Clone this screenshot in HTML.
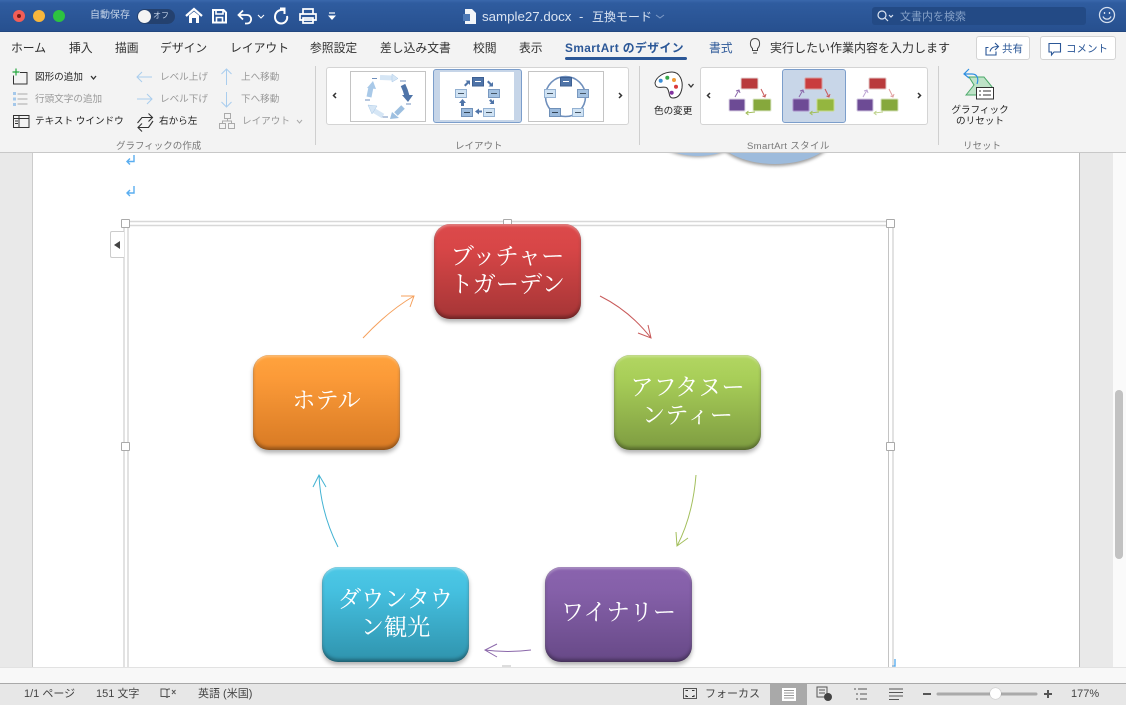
<!DOCTYPE html>
<html lang="ja"><head><meta charset="utf-8"><title>sample27.docx</title>
<style>
html,body{margin:0;padding:0}
body{width:1126px;height:705px;overflow:hidden;position:relative;background:#e8e8e8;font-family:"Liberation Sans","Noto Sans CJK JP",sans-serif;color:#2b2b2b}
.a{position:absolute}
.t{position:absolute;white-space:nowrap;line-height:14px}
.tab{font-size:11.8px;top:41px;color:#303030}
.s{font-size:9.6px;color:#222}
.d{font-size:9.6px;color:#999}
.g{font-size:9.5px;color:#777;top:140px}
.node{position:absolute;width:147px;height:95px;border-radius:16px;box-shadow:0 3px 4px rgba(0,0,0,.3),inset 0 -3px 3px rgba(0,0,0,.3),inset 0 2px 2px rgba(255,255,255,.3),inset 0 0 1px rgba(0,0,0,.35);color:#fff;font-family:"Liberation Serif","Noto Serif CJK SC",serif;font-size:23.2px;line-height:28px;text-align:center;box-sizing:border-box;display:flex;align-items:center;justify-content:center;padding:0 7px 2px}
.h{position:absolute;width:7px;height:7px;background:#fff;border:1px solid #aaa;border-radius:1px}
.st{position:absolute;font-size:11px;top:687px;color:#444;white-space:nowrap;line-height:14px}
svg{position:absolute;overflow:visible}
.box{position:absolute;background:#fff;border:1px solid #d4d4d4;border-radius:3px;box-sizing:border-box}
</style></head><body>

<!-- document -->
<div class="a" style="left:0;top:153px;width:1113px;height:514px;background:#e9e9e9"></div>
<div class="a" style="left:32px;top:153px;width:1048px;height:514px;background:#fff;border-right:1px solid #bbb;border-left:1px solid #ccc;box-sizing:border-box"></div>
<div class="a" style="left:1113px;top:153px;width:13px;height:530px;background:#fafafa"></div>
<div class="a" style="left:1115px;top:390px;width:8px;height:169px;background:#c2c2c2;border-radius:4px"></div>
<div class="a" style="left:0;top:667px;width:1126px;height:16px;background:#f8f8f8;border-top:1px solid #e2e2e2;box-sizing:border-box"></div>

<!-- circles peeking below ribbon -->
<div class="a" style="left:715px;top:100px;width:120px;height:64px;border-radius:50%;background:#9dbbdc;box-shadow:0 2px 3px rgba(0,0,0,.4)"></div>
<div class="a" style="left:655px;top:110px;width:86px;height:46px;border-radius:50%;background:#9dbbdc;box-shadow:0 1px 3px rgba(0,0,0,.4)"></div>

<!-- return marks, frame, arrows -->
<svg style="left:0;top:0" width="1126" height="705" fill="none">
<g stroke="#5aaef0" stroke-width="1.4"><path d="M134 155V161.5H127M130 158.5L127 161.5L130 164.5"/><path d="M134 186V193H127M130 190L127 193L130 196"/><path d="M895 659V666H892"/></g>
<path d="M125 221.5H891M125 225.5H891" stroke="#d8d8d8" stroke-width="1.5"/>
<path d="M124 225V667M128 225V667M888.5 225V667M893 225V667" stroke="#c4c4c4"/>
<g stroke-width="1" fill="none">
<path d="M363 338C378 322 395 307 414 296M401 296H414L410 307" stroke="#f5a05c"/>
<path d="M600 296C620 306 637 320 651 338M648 325L651 338L638 333" stroke="#c85a5a"/>
<path d="M696 475C694 500 688 525 677 546M676 532L677 546L688 538" stroke="#a3bf5c"/>
<path d="M531 650C515 652 500 652 485 650M497 644L485 650L497 657" stroke="#8b68aa"/>
<path d="M338 547C327 525 320 500 319 475M313 487L319 475L326 487" stroke="#43b3d3"/>
</g>
</svg>
<div class="h" style="left:121px;top:219px"></div><div class="h" style="left:503px;top:219px"></div><div class="h" style="left:886px;top:219px"></div>
<div class="h" style="left:121px;top:442px"></div><div class="h" style="left:886px;top:442px"></div>
<div class="a" style="left:502px;top:665px;width:9px;height:2px;background:#ddd"></div>
<div class="a" style="left:110px;top:231px;width:14px;height:27px;background:#fff;border:1px solid #ccc;border-right:0;border-radius:2px 0 0 2px;box-sizing:border-box"></div>
<div class="a" style="left:114px;top:241px;border:4px solid transparent;border-right:6px solid #444;border-left:0"></div>

<div class="node" style="left:434px;top:224px;background:linear-gradient(#dc4a4b,#d84647 25%,#a53536)">ブッチャー<br>トガーデン</div>
<div class="node" style="left:614px;top:355px;background:linear-gradient(#b2d662,#a8ce58 25%,#7e9c41)">アフタヌー<br>ンティー</div>
<div class="node" style="left:253px;top:355px;background:linear-gradient(#ffa33d,#fb9a38 25%,#d87a24);padding-bottom:3px">ホテル</div>
<div class="node" style="left:322px;top:567px;background:linear-gradient(#4dc8e6,#45c0e0 25%,#2f93ad)">ダウンタウ<br>ン観光</div>
<div class="node" style="left:545px;top:567px;background:linear-gradient(#8a63ae,#8560a9 25%,#674987);padding-bottom:4px">ワイナリー</div>

<!-- title bar -->
<div class="a" style="left:0;top:0;width:1126px;height:32px;background:linear-gradient(#3a68ac 0,#2f5c9f 10%,#27508f);border-bottom:1px solid #22477f;box-sizing:border-box"></div>
<div class="a" style="left:13px;top:10px;width:12px;height:12px;border-radius:50%;background:#f25e57"></div><div class="a" style="left:17px;top:14px;width:4px;height:4px;border-radius:50%;background:#7a1a14"></div>
<div class="a" style="left:33px;top:10px;width:12px;height:12px;border-radius:50%;background:#f8b63c"></div>
<div class="a" style="left:53px;top:10px;width:12px;height:12px;border-radius:50%;background:#2dc340"></div>
<div class="t" style="left:90px;top:9px;font-size:10px;color:#c4d3e8">自動保存</div>
<div class="a" style="left:137px;top:9px;width:38px;height:15px;border-radius:8px;background:#24416f"></div>
<div class="a" style="left:138px;top:10px;width:13px;height:13px;border-radius:50%;background:#f4f4f4"></div>
<div class="t" style="left:153px;top:9px;font-size:8px;color:#c4d3e8">オフ</div>
<svg style="left:0;top:0" width="1126" height="32" fill="none" stroke="#fff" stroke-width="2">
<path d="M186 16L194 9L202 16" stroke-width="2.2"/><path d="M189 15.5L194 11.5L199 15.5V23H196V18H192V23H189Z" fill="#fff" stroke="none"/>
<path d="M213 10H223.500L226 12.500V22.500H213Z"/><path d="M216 10V14H223V10" stroke-width="1.6"/><path d="M216.500 22V17.500H222.500V22" stroke-width="1.6"/>
<path d="M243 10.500L238.500 15L243 19.500M239 15H247C252.500 15 252.500 23.500 247 23.500H245" stroke-width="1.8"/>
<path d="M258 15L261 18L264 15" stroke-width="1.1"/>
<path d="M280 8.500H284.500V14M284 10C278 9 275 13 275 17C275 21 278 23.500 281 23.500C285 23.500 288 20 287 16" stroke-width="2"/>
<path d="M303 14V9H313V14M300 14H316V20H300ZM303 18H313V23H303Z" stroke-width="1.7"/>
<path d="M329 13H335" stroke-width="1.2"/><path d="M328 15.500H336L332 20Z" fill="#fff" stroke="none"/>
</svg>
<svg style="left:463px;top:9px" width="14" height="16"><path d="M2 0H9L13 4V15H2Z" fill="#f2f5f9"/><rect x="0" y="5" width="7" height="7" fill="#4c78b5"/></svg>
<div class="t" style="left:482px;top:10px;font-size:13.300px;color:#d9e3f1">sample27.docx</div>
<div class="t" style="left:579px;top:10px;font-size:13px;color:#d9e3f1">-</div>
<div class="t" style="left:592px;top:10px;font-size:12px;color:#d9e3f1">互換モード</div>
<svg style="left:655px;top:14px" width="10" height="6" fill="none" stroke="#7d9ac6"><path d="M1 1L5 4L9 1"/></svg>
<div class="a" style="left:872px;top:7px;width:214px;height:18px;background:#234a85;border-radius:3px"></div>
<svg style="left:877px;top:10px" width="16" height="12" fill="none" stroke="#dbe4f1" stroke-width="1.2"><circle cx="5" cy="5" r="4"/><path d="M8 8L11 11M12 5L14 7L16 5"/></svg>
<div class="t" style="left:900px;top:10px;font-size:11px;color:#86a1c8">文書内を検索</div>
<svg style="left:1098px;top:6px" width="18" height="18" fill="none" stroke="#d5dfee" stroke-width="1.3"><circle cx="9" cy="9" r="7.500"/><path d="M5 10.500C6.500 14 11.500 14 13 10.500"/><path d="M6.500 6V8M11.500 6V8"/></svg>

<!-- ribbon -->
<div class="a" style="left:0;top:32px;width:1126px;height:121px;background:#f3f3f3;border-bottom:1px solid #c8c8c8;box-sizing:border-box"></div>
<span class="t tab" style="left:11px">ホーム</span>
<span class="t tab" style="left:69px">挿入</span>
<span class="t tab" style="left:115px">描画</span>
<span class="t tab" style="left:160px">デザイン</span>
<span class="t tab" style="left:230px">レイアウト</span>
<span class="t tab" style="left:310px">参照設定</span>
<span class="t tab" style="left:380px">差し込み文書</span>
<span class="t tab" style="left:473px">校閲</span>
<span class="t tab" style="left:519px">表示</span>
<span class="t tab" style="left:565px;color:#2b5797;font-weight:700;letter-spacing:.45px">SmartArt のデザイン</span>
<div class="a" style="left:565px;top:57px;width:122px;height:3px;background:#2b5797;border-radius:2px"></div>
<span class="t tab" style="left:709px;color:#2b5797">書式</span>
<svg style="left:748px;top:37px" width="14" height="18" fill="none" stroke="#444"><path d="M4.500 11.500C1 8 2 1.500 7 1.500C12 1.500 13 8 9.500 11.500V13.500H4.500ZM5 16H9"/></svg>
<span class="t tab" style="left:770px;font-size:12px">実行したい作業内容を入力します</span>

<div class="box" style="left:976px;top:36px;width:54px;height:24px"></div>
<svg style="left:985px;top:42px" width="14" height="14" fill="none" stroke="#2b5797" stroke-width="1.1"><path d="M10 1L13.500 4.500L10 8M13 4.500C8 4.500 6 6 5 9.500M3.500 5.500H1V13H11V9.500"/></svg>
<span class="t" style="left:1002px;top:42px;font-size:10.5px;color:#2b5797">共有</span>
<div class="box" style="left:1040px;top:36px;width:76px;height:24px"></div>
<svg style="left:1048px;top:42px" width="14" height="14" fill="none" stroke="#2b5797" stroke-width="1.1"><path d="M1 1.500H12.500V10H6L3.500 13V10H1Z"/></svg>
<span class="t" style="left:1066px;top:42px;font-size:10.5px;color:#2b5797">コメント</span>

<!-- graphic group -->
<svg style="left:0;top:60px" width="320" height="80" fill="none">
<path d="M13.500 15.500V24H27V12.500H20" stroke="#333"/><path d="M16 8.500V15.500M12.500 12H19.500" stroke="#22a83d" stroke-width="1.2"/>
<path d="M13 32H16V35H13ZM13 37.500H16V40.500H13ZM13 43H16V46H13Z" fill="#a5c8ea"/><path d="M17.500 34H27.500M17.500 39H27.500M17.500 44H27.500" stroke="#aaa"/>
<path d="M13.500 55.500H29V67.500H13.500ZM19 55.500V67.500M13.500 58.500H29" stroke="#333"/><path d="M15 61H18M15 63.500H18" stroke="#333"/>
<path d="M137 17H152M142 12L137 17L142 22M137 39H152M147 34L152 39L147 44" stroke="#a9cdee"/>
<path d="M226.500 9V25M221.500 14L226.500 9L231.500 14M226.500 32V47M221.500 42L226.500 47L231.500 42" stroke="#a9cdee"/>
<path d="M137.500 63L142 57.500H152.500M148.500 53.500L152.500 57.500L148.500 61.500M153 61L148.500 67.500H138M142 63.500L138 67.500L142 71.500" stroke="#333" stroke-width="1.1"/>
<path d="M224.500 53.500H230.500V58.500H224.500ZM219.500 63.500H225.500V68.500H219.500ZM228.500 63.500H234.500V68.500H228.500ZM227.500 58.500V61M222.500 63.500V61H231.500V63.500" stroke="#aaa"/>
<path d="M91 16L93.500 19L96 16" stroke="#333" stroke-width="1.3"/>
<path d="M297 60L299.500 63L302 60" stroke="#aaa"/>
</svg>
<span class="t s" style="left:35px;top:71px">図形の追加</span>
<span class="t d" style="left:35px;top:93px">行頭文字の追加</span>
<span class="t s" style="left:35px;top:115px">テキスト ウインドウ</span>
<span class="t d" style="left:160px;top:71px">レベル上げ</span>
<span class="t d" style="left:160px;top:93px">レベル下げ</span>
<span class="t s" style="left:159px;top:115px">右から左</span>
<span class="t d" style="left:241px;top:71px">上へ移動</span>
<span class="t d" style="left:241px;top:93px">下へ移動</span>
<span class="t d" style="left:242px;top:115px">レイアウト</span>
<span class="t g" style="left:116px">グラフィックの作成</span>
<div class="a" style="left:315px;top:66px;width:1px;height:79px;background:#cfcfcf"></div>

<!-- layout group -->
<div class="box" style="left:326px;top:67px;width:303px;height:58px"></div>
<div class="a" style="left:350px;top:71px;width:76px;height:51px;background:#fff;border:1px solid #c4c4c4;box-sizing:border-box"></div>
<div class="a" style="left:433px;top:69px;width:89px;height:54px;background:#c6d5e8;border:1px solid #7c9ecb;border-radius:3px;box-sizing:border-box"></div>
<div class="a" style="left:440px;top:72px;width:74px;height:48px;background:#fff"></div>
<div class="a" style="left:528px;top:71px;width:76px;height:51px;background:#fff;border:1px solid #c4c4c4;box-sizing:border-box"></div>
<svg style="left:320px;top:60px" width="320" height="70" fill="none">
<path d="M16 33L13.500 35.500L16 38M299 33L301.500 35.500L299 38" stroke="#333" stroke-width="1.500"/>
<!-- thumb 1 -->
<path d="M60 17.500L73 18" stroke="#d6e6f5" stroke-width="5"/><path d="M72 14L78 18.500L72 22Z" fill="#d6e6f5" stroke="#a9c9e8" stroke-width=".5"/>
<path d="M83 25C85 29 86 32 87 36" stroke="#4f74a8" stroke-width="5"/><path d="M82 35L93 35L88 42Z" fill="#4f74a8"/>
<path d="M83 47L76 54" stroke="#9dbfe0" stroke-width="5"/><path d="M72 52L79 58L70 59Z" fill="#9dbfe0"/>
<path d="M63 56L53 50" stroke="#d6e6f5" stroke-width="5"/><path d="M48 45L57 46L52 54Z" fill="#d6e6f5" stroke="#a9c9e8" stroke-width=".5"/>
<path d="M49 37L51 27" stroke="#a9c9e8" stroke-width="5"/><path d="M47 28L53 21L56 29Z" fill="#a9c9e8"/>
<path d="M52 18.500H57M80 21H86M86 44H91M62.500 57H68M45 40H50" stroke="#6f8fbc"/>
<!-- thumb 2 -->
<g fill="#4f74a8"><path d="M144 25L147 22L145.500 20.500H150V25L148.500 23.500L145.500 26.500Z"/><path d="M167 22L168.500 20.500L171.500 23.500L173 22V26.500H168.500L170 25Z"/><path d="M174 39.500V44H169.500L171 42.500L169 40.500L171 39L172.500 41Z"/><path d="M155 51.500L159 48.500V50.500H162V52.500H159V54.500Z"/><path d="M142.500 39L146 43H144V46H141V43H139Z"/></g>
<rect x="152.500" y="17.500" width="11" height="8.500" fill="#4f74a8" stroke="#3d5f92"/><path d="M155 21.500H161" stroke="#fff"/>
<rect x="168.500" y="29.500" width="11" height="8" fill="#a4c2e2" stroke="#7998bf"/><path d="M171 33.500H177" stroke="#456"/>
<rect x="135.500" y="29.500" width="11" height="8" fill="#cfe2f3" stroke="#93b1d2"/><path d="M138 33.500H144" stroke="#456"/>
<rect x="141.500" y="48.500" width="11" height="8" fill="#9cbbdd" stroke="#6f90b8"/><path d="M144 52.500H150" stroke="#345"/>
<rect x="163.500" y="48.500" width="11" height="8" fill="#cfe2f3" stroke="#93b1d2"/><path d="M166 52.500H172" stroke="#456"/>
<!-- thumb 3 -->
<circle cx="245.500" cy="36.500" r="20" stroke="#6f8fbc" stroke-width="1.600"/>
<rect x="240.500" y="17.500" width="11" height="8.500" fill="#4f74a8" stroke="#3d5f92"/><path d="M243 21.500H249" stroke="#fff"/>
<rect x="224.500" y="29.500" width="11" height="8" fill="#cfe2f3" stroke="#93b1d2"/><path d="M227 33.500H233" stroke="#456"/>
<rect x="257.500" y="29.500" width="11" height="8" fill="#a4c2e2" stroke="#7998bf"/><path d="M260 33.500H266" stroke="#456"/>
<rect x="229.500" y="48.500" width="11" height="8" fill="#9cbbdd" stroke="#6f90b8"/><path d="M232 52.500H238" stroke="#345"/>
<rect x="252.500" y="48.500" width="11" height="8" fill="#cfe2f3" stroke="#93b1d2"/><path d="M255 52.500H261" stroke="#456"/>
</svg>
<span class="t g" style="left:455px">レイアウト</span>
<div class="a" style="left:639px;top:66px;width:1px;height:79px;background:#cfcfcf"></div>

<!-- colours -->
<svg style="left:654px;top:71px" width="44" height="30" fill="none">
<path d="M1 12C2 6 10 1 18 1C26 1 29 10 28 17C27 23 24 27 19 27C14 27 16 20 13 17C10 14 2 20 1 12Z" stroke="#333" fill="#fff"/>
<circle cx="6.700" cy="9.700" r="2" fill="#3a8fd8"/><circle cx="13.300" cy="6.700" r="2" fill="#37a84a"/><circle cx="20" cy="9" r="2" fill="#f09a35"/><circle cx="22" cy="15.700" r="2" fill="#d93a3a"/><circle cx="17.700" cy="21.700" r="2" fill="#8232a0"/>
<path d="M34.500 13L37 16L39.500 13" stroke="#333" stroke-width="1.300"/>
</svg>
<span class="t s" style="left:654px;top:105px">色の変更</span>

<!-- styles -->
<div class="box" style="left:700px;top:67px;width:228px;height:58px"></div>
<div class="a" style="left:782px;top:69px;width:64px;height:54px;background:#c8d6e8;border:1px solid #7c9ecb;border-radius:3px;box-sizing:border-box"></div>
<svg style="left:700px;top:60px" width="230" height="70" fill="none">
<path d="M10 33L7.500 35.500L10 38M218 33L220.500 35.500L218 38" stroke="#333" stroke-width="1.500"/>
<rect x="41" y="18" width="17" height="11" rx="1" fill="#b93a3c" stroke="#e3d4d4"/><rect x="29" y="39" width="16" height="12" rx="1" fill="#6d4b95" stroke="#ddd5e6"/><rect x="53" y="39" width="18" height="12" rx="1" fill="#86a83c" stroke="#dfe8cc"/>
<path d="M61 29L65 37M62.500 36L65 37L66 34" stroke="#c85a5a"/><path d="M35 37L39 30M36 31L39 30L40 33" stroke="#8b68aa"/><path d="M55 52L46 53M48.500 51L46 53L48.500 55" stroke="#a3bf5c"/>
<rect x="105" y="18" width="17" height="11" rx="1" fill="#c93c3e" stroke="#d89a9a"/><rect x="93" y="39" width="16" height="12" rx="1" fill="#6d4b95" stroke="#a88dc8"/><rect x="117" y="39" width="17" height="12" rx="1" fill="#94b63f" stroke="#c8dc88"/>
<path d="M125 29L129 37M126.500 36L129 37L130 34" stroke="#c85a5a"/><path d="M99 37L103 30M100 31L103 30L104 33" stroke="#8b68aa"/><path d="M119 52L110 53M112.500 51L110 53L112.500 55" stroke="#a3bf5c"/>
<rect x="169" y="18" width="17" height="11" rx="1" fill="#b93a3c" stroke="#e3c4c4"/><rect x="157" y="39" width="16" height="12" rx="1" fill="#6d4b95" stroke="#cfc4e0"/><rect x="181" y="39" width="17" height="12" rx="1" fill="#86a83c" stroke="#d4e0b8"/>
<path d="M189 29L193 37M190.500 36L193 37L194 34" stroke="#e0a0a0"/><path d="M163 37L167 30M164 31L167 30L168 33" stroke="#bda6d4"/><path d="M183 52L174 53M176.500 51L174 53L176.500 55" stroke="#c0d490"/>
</svg>
<span class="t g" style="left:747px;letter-spacing:.35px">SmartArt スタイル</span>
<div class="a" style="left:938px;top:66px;width:1px;height:79px;background:#cfcfcf"></div>

<!-- reset -->
<svg style="left:960px;top:66px" width="42" height="36" fill="none">
<path d="M6 29L14 19L9 11H24L33 22V29Z" fill="#bfe3c8" stroke="#4aa868"/>
<rect x="16.500" y="21.500" width="17" height="11.500" fill="#fff" stroke="#333"/><path d="M19 25H21M23 25H31M19 29H21M23 29H31" stroke="#333"/>
<path d="M9 3L4 8L9 12M4 8H12C17 8 19 12 17 18" stroke="#2f8fe0" stroke-width="1.200"/>
</svg>
<span class="t s" style="left:951px;top:105px;line-height:11px;text-align:center;width:58px">グラフィック<br>のリセット</span>
<span class="t g" style="left:963px">リセット</span>

<!-- status -->
<div class="a" style="left:0;top:683px;width:1126px;height:22px;background:#e7e7e7;border-top:1px solid #a9a9a9;box-sizing:border-box"></div>
<span class="st" style="left:24px">1/1 ページ</span>
<span class="st" style="left:96px">151 文字</span>
<svg style="left:160px;top:688px" width="16" height="12" fill="none" stroke="#555"><path d="M1 1H5C6 1 7 1.500 7 3V10C7 9 6 8.500 5 8.500H1ZM7 3C7 1.500 8 1 9 1H10M7 10C7 9 8 8.500 9 8.500H10M12 2L15.500 6M15.500 2L12 6"/></svg>
<span class="st" style="left:198px">英語 (米国)</span>
<svg style="left:683px;top:688px" width="14" height="12" fill="none" stroke="#555"><rect x=".5" y=".5" width="13" height="10"/><path d="M3 3V2.500H5M9 2.500H11V3M3 7V8.500H5M9 8.500H11V7" stroke="#333"/></svg>
<span class="st" style="left:705px">フォーカス</span>
<div class="a" style="left:770px;top:684px;width:37px;height:21px;background:#a9a9a9"></div>
<svg style="left:770px;top:684px" width="340" height="21" fill="none">
<path d="M12 4H26V17H12Z" fill="#fff"/><path d="M14 6.500H24M14 9H24M14 11.500H24M14 14H24" stroke="#999"/>
<path d="M47 3H57V13H47ZM49 6H55M49 9H55" stroke="#555"/><circle cx="58" cy="13" r="4" fill="#444"/>
<path d="M84 5H86M88 5H97M86 10H88M90 10H97M86 15H88M90 15H97" stroke="#555"/>
<path d="M119 5H133M119 8.500H133M119 12H133M119 15.500H129" stroke="#555"/>
<path d="M153 10H161" stroke="#555" stroke-width="2"/>
<path d="M168 10H266" stroke="#aaa" stroke-width="3" stroke-linecap="round"/>
<path d="M274 10H282M278 6V14" stroke="#555" stroke-width="2"/>
</svg>
<div class="a" style="left:990px;top:688px;width:11px;height:11px;border-radius:50%;background:#fff;box-shadow:0 0 1px #888"></div>
<span class="st" style="left:1071px">177%</span>
</body></html>
